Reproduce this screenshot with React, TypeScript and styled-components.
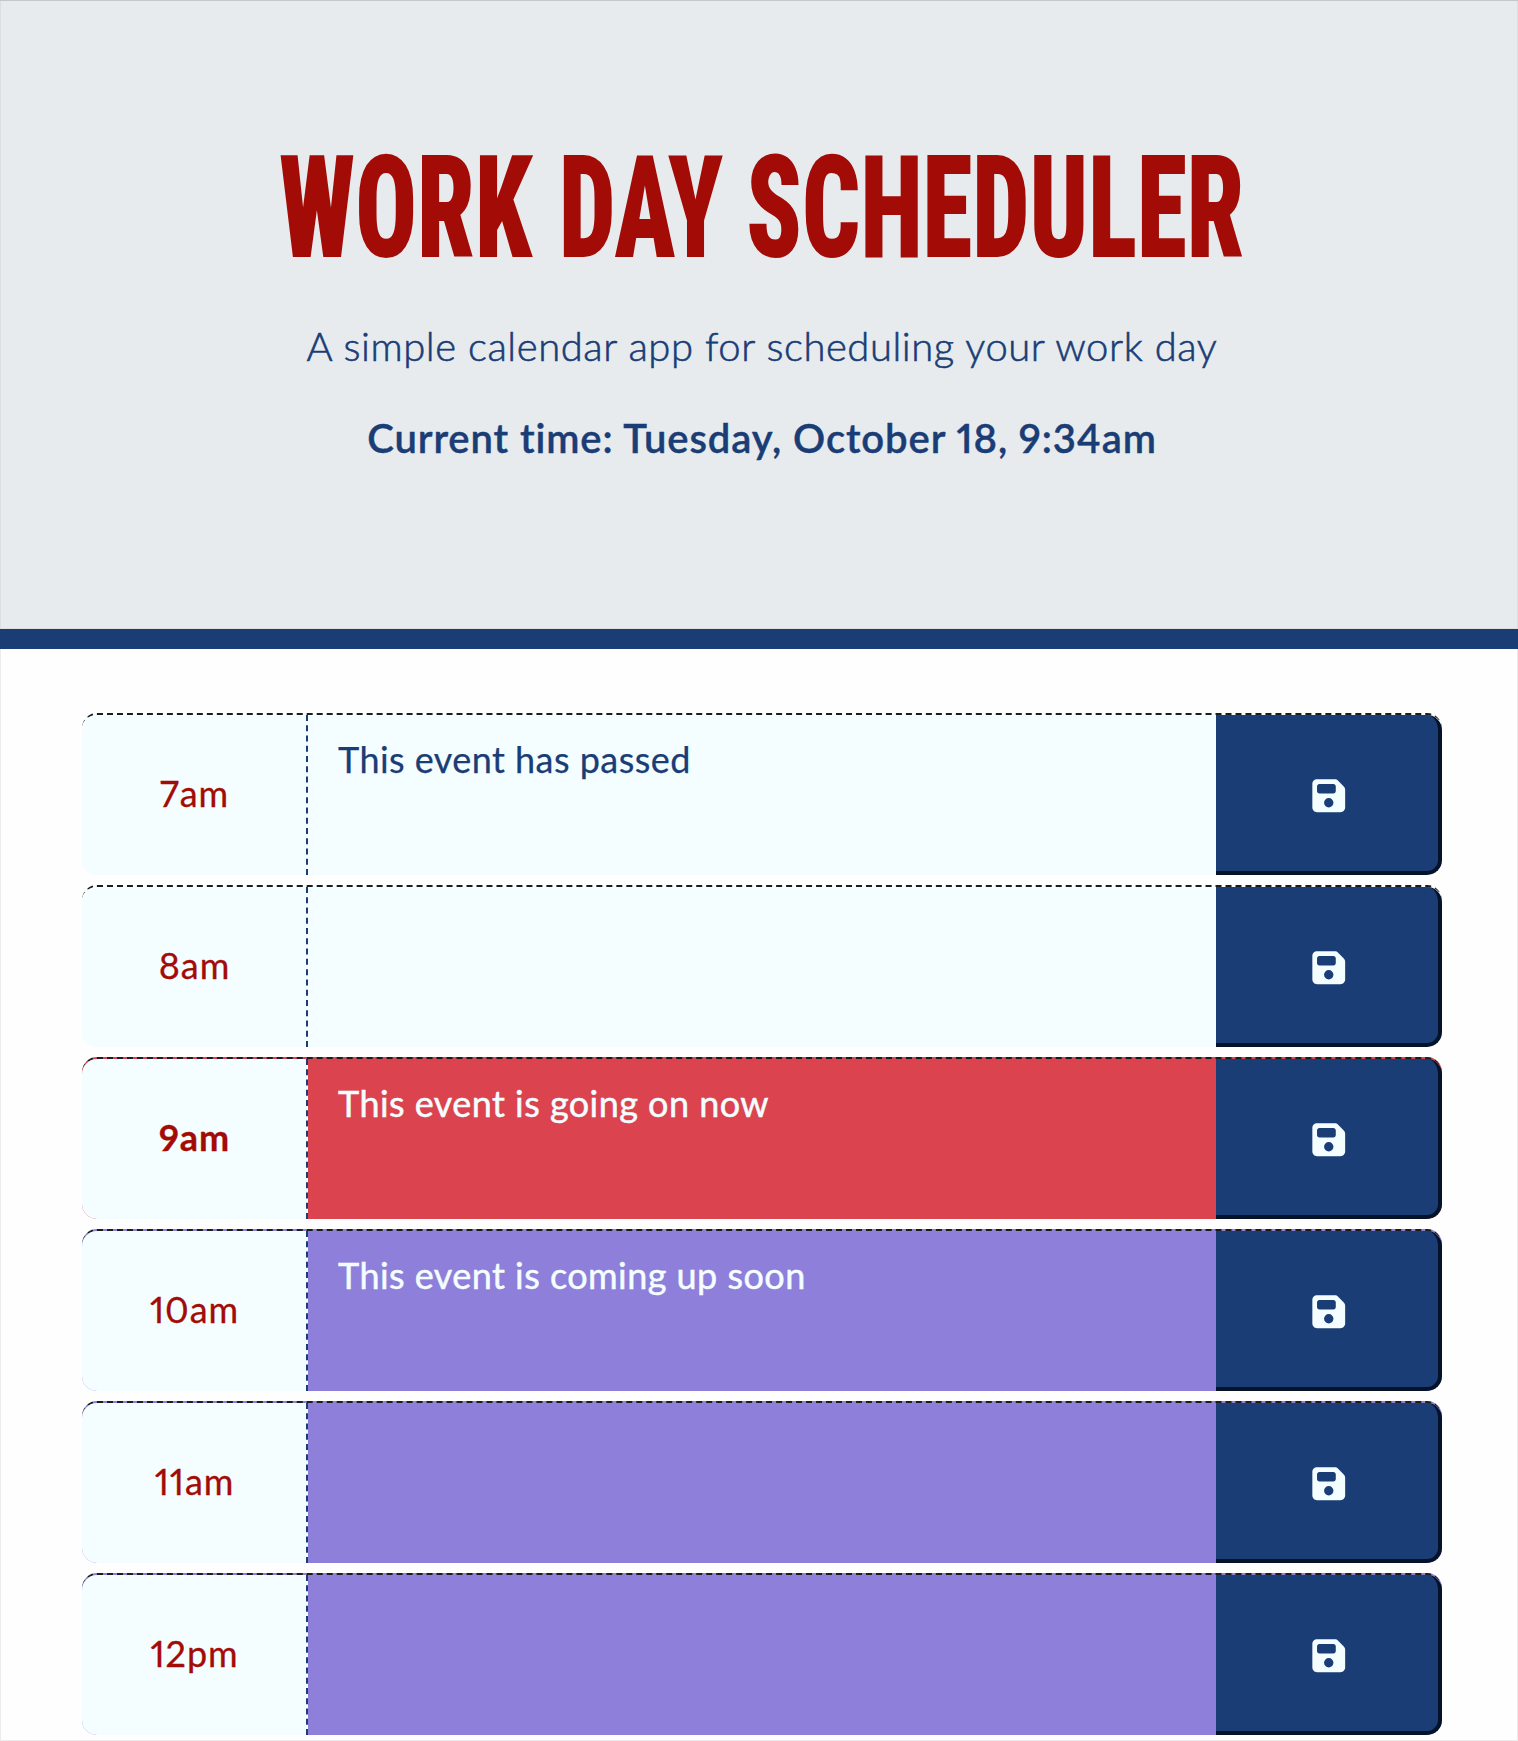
import React from "react";
import styled, { createGlobalStyle, css } from "styled-components";
import { FaFloppyDisk } from "react-icons/fa6";

type Status = "past" | "present" | "future";

const color = {
  navy: "#1a3d76",
  red: "#a30b06",
  mist: "#e7ebee",
  azure: "#f4fdff",
};

const rowColor: Record<Status, string> = {
  past: "#f4fdff",
  present: "#db434e",
  future: "#8e7fda",
};

const GlobalStyle = createGlobalStyle`
  * { box-sizing: border-box; }
  body {
    margin: 0;
    background: #fefefe;
    font-family: Lato, "Open Sans", sans-serif;
  }
`;

const Page = styled.div`
  height: 1741px;
  overflow: hidden;
  box-shadow: inset 0 0 0 1px rgba(0, 0, 0, 0.07), inset 0 1px 0 rgba(0, 0, 0, 0.1);
`;

const Header = styled.header`
  display: flex;
  flex-direction: column;
  align-items: center;
  height: 649px;
  padding: 133px 0 0 6px;
  border-bottom: 20px solid ${color.navy};
  background: ${color.mist};
  box-shadow: inset 0 0 0 1px rgba(0, 0, 0, 0.05), inset 0 1px 0 rgba(0, 0, 0, 0.1);
  color: ${color.navy};
`;

const Title = styled.h1`
  display: flex;
  gap: 26px;
  margin: 0 4px 39px 0;
  color: ${color.red};
  font: 900 143.5px/150px Roboto, sans-serif;
  font-stretch: 75%;
`;

const Word = styled.span<{ $width: number; $scale: number }>`
  width: ${(p) => p.$width}px;
  white-space: nowrap;
  transform: scaleX(${(p) => p.$scale});
  transform-origin: left;
`;

const Tagline = styled.p`
  margin: 0 0 44px;
  font-size: 40px;
  font-weight: 300;
  line-height: 48px;
  letter-spacing: 0.55px;
  -webkit-text-stroke: 0.6px currentColor;
`;

const CurrentTime = styled.p`
  margin: 0;
  font-size: 40px;
  font-weight: 600;
  font-variant-numeric: proportional-nums;
  line-height: 48px;
  letter-spacing: 0.9px;
  -webkit-text-stroke: 0.4px currentColor;
`;

const Schedule = styled.main`
  display: flex;
  flex-direction: column;
  gap: 10px;
  padding: 64px 76px 0 82px;
`;

const Row = styled.section<{ $status: Status }>`
  display: grid;
  grid-template-columns: 226px 1fr 226px;
  height: 162px;
  border-top: 2px dashed #1c1c1c;
  border-radius: 15px;
  background: ${(p) => rowColor[p.$status]};
`;

const Hour = styled.div<{ $current: boolean }>`
  display: flex;
  align-items: center;
  justify-content: center;
  padding: 0 0 5px 1px;
  border-right: 2px dashed ${color.navy};
  border-radius: 15px 0 0 15px;
  background: ${color.azure};
  color: ${color.red};
  font-size: 36px;
  font-variant-numeric: proportional-nums;
  letter-spacing: 0.9px;
  -webkit-text-stroke: 0.3px currentColor;
  ${(p) => p.$current && css`font-weight: 700;`}
`;

const EventText = styled.div<{ $status: Status }>`
  padding: 23px 30px;
  color: ${(p) => (p.$status === "past" ? color.navy : color.azure)};
  font-size: 36px;
  line-height: 43px;
  letter-spacing: 0.45px;
  -webkit-text-stroke: ${(p) => (p.$status === "past" ? 0.25 : 0.5)}px currentColor;
`;

const SaveButton = styled.button`
  display: flex;
  align-items: center;
  justify-content: center;
  padding: 5px 0 0 4px;
  border: 0 solid #04122a;
  border-width: 0 4px 4px 0;
  border-radius: 0 15px 15px 0;
  background: ${color.navy};
  color: ${color.azure};
  font-size: 37.5px;
`;

const blocks: { hour: string; status: Status; text: string }[] = [
  { hour: "7am", status: "past", text: "This event has passed" },
  { hour: "8am", status: "past", text: "" },
  { hour: "9am", status: "present", text: "This event is going on now" },
  { hour: "10am", status: "future", text: "This event is coming up soon" },
  { hour: "11am", status: "future", text: "" },
  { hour: "12pm", status: "future", text: "" },
];

export default function App() {
  return (
    <Page>
      <GlobalStyle />
      <Header>
        <Title>
          <Word $width={254} $scale={0.714}>WORK</Word>
          <Word $width={161} $scale={0.7}>DAY</Word>
          <Word $width={496} $scale={0.71}>SCHEDULER</Word>
        </Title>
        <Tagline>A simple calendar app for scheduling your work day</Tagline>
        <CurrentTime>Current time: Tuesday, October 18, 9:34am</CurrentTime>
      </Header>
      <Schedule>
        {blocks.map(({ hour, status, text }) => (
          <Row key={hour} $status={status}>
            <Hour $current={status === "present"}>{hour}</Hour>
            <EventText $status={status}>{text}</EventText>
            <SaveButton aria-label="Save">
              <FaFloppyDisk />
            </SaveButton>
          </Row>
        ))}
      </Schedule>
    </Page>
  );
}
